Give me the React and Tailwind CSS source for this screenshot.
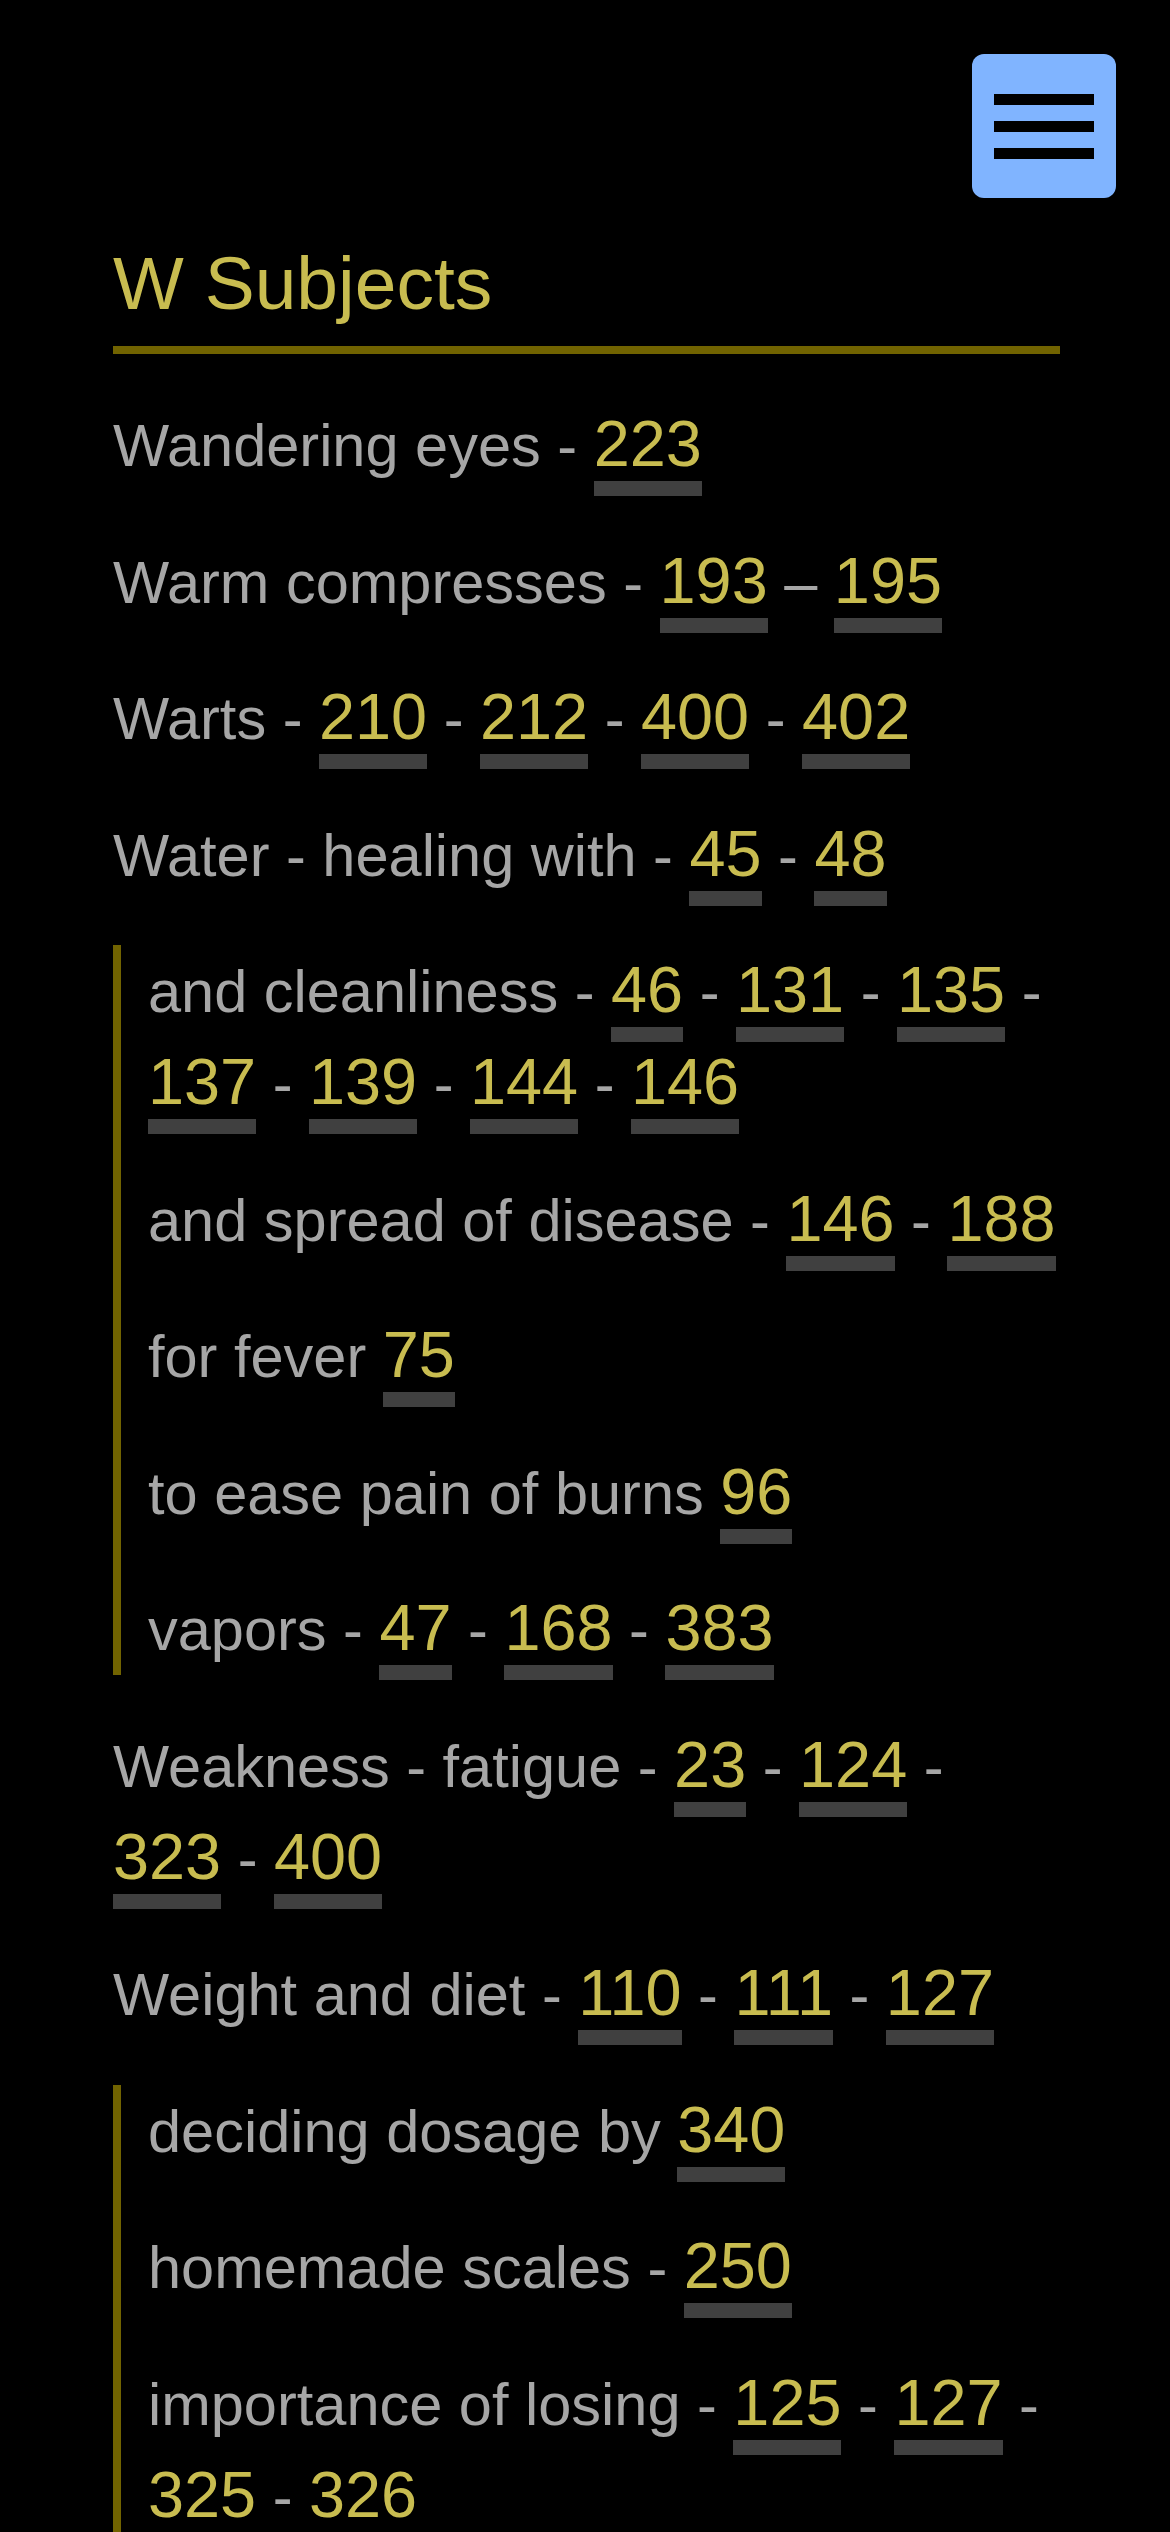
const entries = [
  { label: 'Wandering eyes - ', pages: ['223'] },
  { label: 'Warm compresses - ', pages: ['193', '195'], sep: ' – ' },
  { label: 'Warts - ', pages: ['210', '212', '400', '402'] },
  {
    label: 'Water - healing with - ',
    pages: ['45', '48'],
    subs: [
      { label: 'and cleanliness - ', pages: ['46', '131', '135', '137', '139', '144', '146'] },
      { label: 'and spread of disease - ', pages: ['146', '188'] },
      { label: 'for fever ', pages: ['75'] },
      { label: 'to ease pain of burns ', pages: ['96'] },
      { label: 'vapors - ', pages: ['47', '168', '383'] },
    ],
  },
  { label: 'Weakness - fatigue - ', pages: ['23', '124', '323', '400'] },
  {
    label: 'Weight and diet - ',
    pages: ['110', '111', '127'],
    subs: [
      { label: 'deciding dosage by ', pages: ['340'] },
      { label: 'homemade scales - ', pages: ['250'] },
      { label: 'importance of losing - ', pages: ['125', '127', '325', '326'] },
      { label: 'keeping a record - ', pages: ['128'] },
    ],
  },
];

const PageLink = ({ page }) => (
  <a
    href={`#p${page}`}
    className="text-[64.8px] text-[#c8bc50] border-b-[15px] border-[#404040] pb-[1px] no-underline"
  >
    {page}
  </a>
);

const Entry = ({ entry }) => {
  const sep = entry.sep || ' - ';
  return (
    <p>
      {entry.label}
      {entry.pages.map((page, i) => (
        <span key={i}>
          {i > 0 && sep}
          <PageLink page={page} />
        </span>
      ))}
    </p>
  );
};

export default function App() {
  return (
    <div
      className="min-h-screen bg-black text-[#a6a6a6] text-[59.5px] leading-[90px]"
      style={{ fontFamily: '"Liberation Sans", Arial, Helvetica, sans-serif' }}
    >
      <div className="flex justify-end pt-[54px] pr-[54px]">
        <button className="w-[144px] h-[144px] rounded-[12px] bg-[#80b4ff] flex flex-col items-center justify-center gap-[16px]">
          <span className="block w-[100px] h-[11px] bg-black"></span>
          <span className="block w-[100px] h-[11px] bg-black"></span>
          <span className="block w-[100px] h-[11px] bg-black"></span>
        </button>
      </div>

      <div className="pl-[113px] pr-[110px] pt-[40px]">
        <h2 className="text-[75px] leading-[1.2] text-[#c8bc50] pb-[18px] border-b-[8px] border-[#716300]">
          W Subjects
        </h2>

        <div className="flex flex-col gap-[44.5px] mt-[45px] pb-[60px]">
          {entries.map((entry, idx) => (
            <div key={idx} className="flex flex-col gap-[44.5px]">
              <Entry entry={entry} />
              {entry.subs && (
                <div className="flex flex-col gap-[44.5px] border-l-[8px] border-[#716300] pl-[27px]">
                  {entry.subs.map((sub, j) => (
                    <Entry key={j} entry={sub} />
                  ))}
                </div>
              )}
            </div>
          ))}
        </div>
      </div>
    </div>
  );
}
